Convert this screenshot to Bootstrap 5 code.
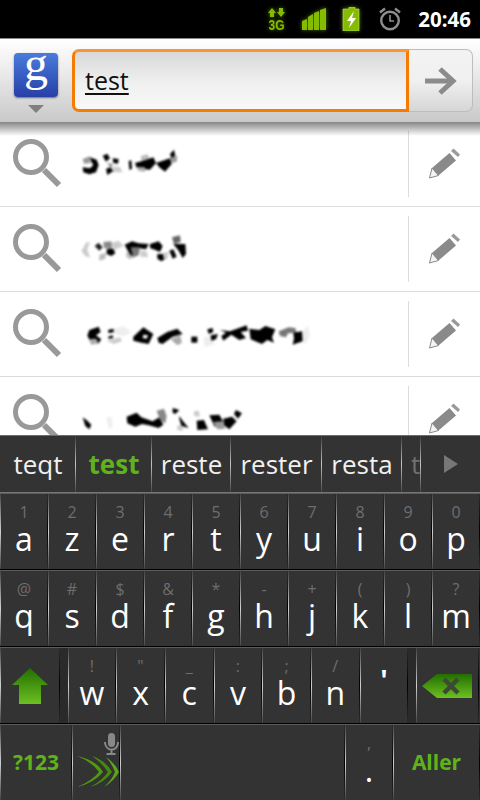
<!DOCTYPE html>
<html lang="fr">
<head>
  <meta charset="UTF-8">
  <title>Recherche Google</title>
  <meta name="viewport" content="width=device-width, initial-scale=1.0">
  <link rel="stylesheet" href="https://cdn.jsdelivr.net/npm/bootstrap@5.3.0/dist/css/bootstrap.min.css">
  <style>
    body {
      background-color: #000;
      font-family: "Open Sans", "Liberation Sans", sans-serif;
    }
    .phone-frame {
      width: 480px;
      height: 800px;
      background-color: #fff;
    }

    /* status bar */
    .status-bar {
      height: 39px;
      flex: none;
      padding-right: 9px;
      background-color: #000;
      border-bottom: 1px solid #8a8a8a;
    }
    .status-time {
      color: #fff;
      font-weight: 700;
      font-size: 20.5px;
      line-height: 1;
    }
    .status-glow {
      filter: drop-shadow(0 0 2px rgba(140, 200, 0, .6));
    }

    /* search header */
    .search-head {
      height: 83px;
      flex: none;
      z-index: 1;
      padding: 10px 7px 0 14px;
      background: linear-gradient(#fff, #f0f0f0 30%, #c9c9c9);
    }
    .search-head::after {
      content: "";
      position: absolute;
      left: 0;
      right: 0;
      top: 100%;
      height: 14px;
      background: linear-gradient(rgba(0, 0, 0, .48), rgba(0, 0, 0, 0));
    }
    .google-col {
      width: 44px;
      margin-right: 14px;
      padding-top: 4px;
    }
    .google-logo {
      width: 44px;
      height: 44px;
      border-radius: 4px;
      background: linear-gradient(#4a7bdc, #2740a8);
      box-shadow: 0 1px 2px rgba(0, 0, 0, .5);
      color: #fff;
      font-family: "Liberation Serif", serif;
      font-size: 48px;
      line-height: 22px;
    }
    .google-caret {
      width: 0;
      height: 0;
      margin-top: 8px;
      border-style: solid;
      border-width: 8px 8px 0;
      border-color: #7f7f7f transparent transparent;
    }
    .query-box {
      width: 337px;
      height: 63px;
      padding-left: 10px;
      border: 3px solid #f57c00;
      border-top-color: #fb9433;
      border-radius: 7px 0 0 7px;
      background: linear-gradient(#d8d8d8, #f0f0f0 55%, #f8f8f8);
      color: #111;
      font-size: 25px;
    }
    .query-box span {
      text-decoration: underline;
      text-underline-offset: 3px;
    }
    .go-btn {
      width: 64px;
      height: 63px;
      border: 1px solid #bdbdbd;
      border-left: 0;
      border-radius: 0 7px 7px 0;
      background: linear-gradient(#f3f3f3, #f0f0f0 50%, #d6d6d6);
    }

    /* suggestions */
    .suggest-row {
      height: 85px;
      flex: none;
      border-bottom: 1px solid #dcdcdc;
    }
    .suggest-icon {
      width: 70px;
      padding-left: 13px;
    }
    .suggest-edit {
      width: 72px;
      height: 66px;
      padding-left: 20px;
      border-left: 1px solid #dcdcdc;
    }
    .smudge {
      filter: blur(.8px);
    }

    /* keyboard */
    .kb-wrap {
      flex: none;
      height: 365px;
      background-color: #333;
      color: #fff;
    }
    .cand-bar {
      height: 58px;
      flex: none;
      border-top: 1px solid #6c6c6c;
      border-bottom: 1px solid #777;
      font-size: 26px;
    }
    .cand-cell {
      background-image: linear-gradient(rgba(255, 255, 255, .05), #c4c4c4 50%, rgba(255, 255, 255, .1));
      background-repeat: no-repeat;
      background-position: right top;
      background-size: 1px 100%;
      color: #f0f0f0;
    }
    .cand-76 { width: 76px; }
    .cand-79 { width: 79px; }
    .cand-91 { width: 91px; }
    .cand-80 { width: 80px; }
    .cand-active {
      color: #5fb31a;
      font-weight: 700;
    }
    .cand-fade {
      width: 19px;
      padding-left: 9px;
      color: #707070;
    }
    .kb-row {
      height: 77px;
      flex: none;
      border-bottom: 1px solid #000;
      border-top: 1px solid #5c5c5c;
    }
    .kb-key {
      flex: none;
      width: 48px;
      padding-top: 9px;
      background-image:
        linear-gradient(#444, #d0d0d0 50%, #444),
        linear-gradient(#2c2c2c, #000 50%, #2c2c2c);
      background-repeat: no-repeat;
      background-position: left top, right top;
      background-size: 1px 100%, 1px 100%;
    }
    .key-hint {
      height: 18px;
      color: #6e6e6e;
      font-size: 16px;
      line-height: 18px;
    }
    .key-char {
      font-size: 32px;
      line-height: 36px;
    }
    .key-quote {
      height: 18px;
      margin-top: 14px;
      font-size: 28px;
      font-weight: 700;
      line-height: 18px;
    }
    .key-row3 { width: 48.7px; }
    .key-shift { width: 60px; padding-top: 0; }
    .key-gap { width: 7.5px; flex: none; background-color: #2a2a2a; }
    .key-del { width: 63px; padding-top: 0; }
    .key-sym { width: 72px; padding-top: 0; }
    .key-swype { padding-top: 0; }
    .key-space { width: 225px; }
    .key-go { width: 87px; padding-top: 0; }
    .key-action {
      color: #5fb31a;
      font-weight: 700;
      font-size: 21px;
    }
  </style>
</head>
<body>
<div class="phone-frame d-flex flex-column overflow-hidden">

  <!-- status bar -->
  <div class="status-bar d-flex align-items-center justify-content-end gap-3">
    <svg class="status-glow" width="19" height="30" viewBox="0 0 19 30">
      <path d="M5 4l4 5H7v4H3V9H1zM14 13l-4-5h2V4h4v4h2z" fill="#86bc00"/>
      <text x="1.500" y="26" textLength="16" lengthAdjust="spacingAndGlyphs" font-family="Liberation Sans, sans-serif" font-weight="700" font-size="15" fill="#86bc00">3G</text>
    </svg>
    <svg class="status-glow" width="24" height="22" viewBox="0 0 24 22">
      <path d="M0 13l5-2v11H0zM6 9l5-3v16H6zM12 5l5-2v19h-5zM18 2l6-2v22h-6z" fill="#86bc00"/>
    </svg>
    <svg class="status-glow" width="21" height="24" viewBox="0 0 21 24">
      <path d="M7 0h6v2h4v22H1V2h6z" fill="#86bc00" stroke="#bcd880" stroke-width=".6"/>
      <path d="M12 4L5 14h4l-2 7 7-10h-4z" fill="#fff"/>
    </svg>
    <svg width="23" height="24" viewBox="0 0 23 24" fill="none" stroke="#8e8e8e">
      <circle cx="11" cy="13.5" r="8.8" stroke-width="2.4"/>
      <path d="M11 8v6h4" stroke-width="1.6"/>
      <path d="M1 5.5L6 1.5M21 5.5L16 1.5" stroke-width="2.4"/>
    </svg>
    <span class="status-time">20:46</span>
  </div>

  <!-- search header -->
  <div class="search-head position-relative d-flex align-items-start">
    <div class="google-col d-flex flex-column align-items-center">
      <div class="google-logo d-flex justify-content-center">g</div>
      <div class="google-caret"></div>
    </div>
    <div class="query-box d-flex align-items-center"><span>test</span></div>
    <div class="go-btn d-flex align-items-center justify-content-center">
      <svg width="32" height="28" viewBox="0 0 32 28" fill="none" stroke="#8b8b8b" stroke-width="5">
        <path d="M0 14h28"/>
        <path d="M15 2l13 12-13 12"/>
      </svg>
    </div>
  </div>

  <!-- suggestions -->
  <div class="flex-grow-1 overflow-hidden">
    <div class="suggest-row d-flex align-items-center">
      <div class="suggest-icon">
        <svg width="50" height="50" viewBox="0 0 50 50" fill="none" stroke="#999">
          <circle cx="18" cy="18" r="15.5" stroke-width="5"/>
          <path d="M31 31l15 15" stroke-width="6"/>
        </svg>
      </div>
      <svg class="smudge flex-grow-1" height="50" viewBox="0 0 338 50" preserveAspectRatio="xMinYMid meet">
        <g transform="scale(.3333)">
          <path fill="#999" d="M38 60l22-8 2 20-20 2z"/>
          <path d="M60 55l20 7 6 16-8 22-20 6-18-6-2-15 22 3 10-10-6-10z"/>
          <path d="M98 50l14-6 8 14-12 10zM128 58l18 2-2 14-14-2zM108 90l14-6 8 12-18 12z"/>
          <path fill="#999" d="M112 72l16 2-4 18z"/>
          <path fill="#ccc" d="M130 82l20 2 8 16h-28z"/>
          <path d="M176 66l8-2 2 26-8 2z"/>
          <path fill="#bbb" d="M212 52l20-6 8 14-24 8z"/>
          <path d="M195 72l35-10 20-7 8 17-18 20-20-2-20-4z"/>
          <path fill="#aaa" d="M200 84l25 1v13l-20-3z"/>
          <path d="M258 72l42-14 5 17-20 23-17-13z"/>
          <path fill="#999" d="M300 58l22-8-2 18-15 4z"/>
          <path d="M300 45l12-13 4 18-12 8z"/>
        </g>
      </svg>
      <div class="suggest-edit d-flex align-items-center">
        <svg width="32" height="32" viewBox="0 0 32 32">
          <path d="M3 20l6.500 7.500L.5 30z" fill="#f4f4f4" stroke="#888"/>
          <path d="M3 20L20.500 5 27 12.500 9.500 27.500z" fill="#8a8a8a"/>
          <path d="M22 3l2.500-2.500 6.500 6L29 9z" fill="#9a9a9a"/>
        </svg>
      </div>
    </div>

    <div class="suggest-row d-flex align-items-center">
      <div class="suggest-icon">
        <svg width="50" height="50" viewBox="0 0 50 50" fill="none" stroke="#999">
          <circle cx="18" cy="18" r="15.5" stroke-width="5"/>
          <path d="M31 31l15 15" stroke-width="6"/>
        </svg>
      </div>
      <svg class="smudge flex-grow-1" height="50" viewBox="0 0 338 50" preserveAspectRatio="xMinYMid meet">
        <g transform="scale(.3333)">
          <path fill="#ccc" d="M48 56l12-2-8 22 8 26-14-6-12-14z"/>
          <path fill="#bbb" d="M88 92l20-6-2 18-18 6z"/>
          <path fill="#ccc" d="M122 58l24-8 14 16-26 12z"/>
          <path fill="#888" d="M100 54l24-2 2 24-24-4z"/>
          <path fill="#222" d="M74 66l12-10 12 14-10 10z"/>
          <path d="M110 76l20-2 6 14-12 8-14-6z"/>
          <path fill="#bbb" d="M170 84l18-2 6 18-16 6-10-10z"/>
          <path fill="#ccc" d="M210 80l20 2 4 18-22-2z"/>
          <path d="M164 62l22-10 20 6 30 2-8 16-24-4-6 16-14 8-12-18z"/>
          <path fill="#777" d="M182 70l28 0-4 24-16 6z"/>
          <path d="M240 60l26-8 12 14-8 18-14-6-16-6z"/>
          <path d="M262 90l18 0 6 14-12 8-12-8z"/>
          <path fill="#ccc" d="M280 86l16-2-4 22-12-4z"/>
          <path d="M298 80l12-4 10 22-12 6z"/>
          <path fill="#666" d="M306 40l24-6 2 20-20 6z"/>
          <path d="M310 60l36 0 2 30-10 12-12-22z"/>
        </g>
      </svg>
      <div class="suggest-edit d-flex align-items-center">
        <svg width="32" height="32" viewBox="0 0 32 32">
          <path d="M3 20l6.500 7.500L.5 30z" fill="#f4f4f4" stroke="#888"/>
          <path d="M3 20L20.500 5 27 12.500 9.500 27.500z" fill="#8a8a8a"/>
          <path d="M22 3l2.500-2.500 6.500 6L29 9z" fill="#9a9a9a"/>
        </svg>
      </div>
    </div>

    <div class="suggest-row d-flex align-items-center">
      <div class="suggest-icon">
        <svg width="50" height="50" viewBox="0 0 50 50" fill="none" stroke="#999">
          <circle cx="18" cy="18" r="15.5" stroke-width="5"/>
          <path d="M31 31l15 15" stroke-width="6"/>
        </svg>
      </div>
      <svg class="smudge flex-grow-1" height="50" viewBox="0 0 338 50" preserveAspectRatio="xMinYMid meet">
        <g transform="translate(10 5) scale(.3333)">
          <path fill="#eee" d="M100 45l30-8 24 16-20 14-30-6zM370 70l30-4 2 26-28 6zM660 60l24-26 6 30-14 28z"/>
          <path d="M28 48l28-10 6 16-14 10 16 12-10 14-14-14-12 2-6-14z"/>
          <path fill="#aaa" d="M26 76l22-2 8 14-22 4z"/>
          <path fill="#ccc" d="M80 80l40-10 6 12-24 8z"/>
          <path d="M84 48l16-4 2 10-16 4zM84 68l14-4 2 8-14 2z"/>
          <path d="M160 68l30-28 30 20-14 30-22-4-24-6z"/>
          <path fill="#fff" d="M190 62l14 2-4 10-12-2z"/>
          <path d="M232 72l30-18 30-10 16 16-30 8-30 22-12-4z"/>
          <path fill="#aaa" d="M272 76l28-12 6 22-14 8z"/>
          <path d="M334 68h18v18h-18z"/>
          <path d="M382 46l16-4 2 12-14 6zM392 64l22-4-6 16-14 4z"/>
          <path d="M420 48l30 4 50-18 4 16-22 4 16 18-20 6-24-16-24 18-6-14 14-10z"/>
          <path d="M508 44l30 4 18-12 30 10-10 24 6 16-20-8-16 12-34-14z"/>
          <path fill="#777" d="M596 52l30-12 20 2 4 14-26 2-6 12-18-4z"/>
          <path d="M640 56l26-4 2 30-30 10 4-18z"/>
        </g>
      </svg>
      <div class="suggest-edit d-flex align-items-center">
        <svg width="32" height="32" viewBox="0 0 32 32">
          <path d="M3 20l6.500 7.500L.5 30z" fill="#f4f4f4" stroke="#888"/>
          <path d="M3 20L20.500 5 27 12.500 9.500 27.500z" fill="#8a8a8a"/>
          <path d="M22 3l2.500-2.500 6.500 6L29 9z" fill="#9a9a9a"/>
        </svg>
      </div>
    </div>

    <div class="suggest-row d-flex align-items-center">
      <div class="suggest-icon">
        <svg width="50" height="50" viewBox="0 0 50 50" fill="none" stroke="#999">
          <circle cx="18" cy="18" r="15.5" stroke-width="5"/>
          <path d="M31 31l15 15" stroke-width="6"/>
        </svg>
      </div>
      <svg class="smudge flex-grow-1" height="78" viewBox="0 0 338 78" preserveAspectRatio="xMinYMid meet">
        <g transform="translate(-70 0) scale(.3333)">
          <path d="M248 112l14 10 12 12-6 14-12-10z"/>
          <path fill="#eee" d="M320 112l14-2 4 30-12 6z"/>
          <path d="M380 110l30-12 14 14 34 12 20-12 12 22-14 10-30-8-20-4-20 8-24-10z"/>
          <path fill="#888" d="M470 92l22-6 8 22-4 22-16-10z"/>
          <path d="M518 84l20 6-12 12-8-4zM538 108l10 14 18 22-22-6-6-22z"/>
          <path fill="#ccc" d="M582 94l14-2 4 18-18-2zM532 136l18 2-2 14-16-2z"/>
          <path d="M590 122l22-2 12 28-32 2z"/>
          <path d="M628 106l30-2 12 22-26 14z"/>
          <path fill="#999" d="M640 126l26-2 10 22-24 2z"/>
          <path d="M670 116l26-6 14 14-22 24-16-12zM708 90l18 10-12 16-12-14z"/>
        </g>
      </svg>
      <div class="suggest-edit d-flex align-items-center">
        <svg width="32" height="32" viewBox="0 0 32 32">
          <path d="M3 20l6.500 7.500L.5 30z" fill="#f4f4f4" stroke="#888"/>
          <path d="M3 20L20.500 5 27 12.500 9.500 27.500z" fill="#8a8a8a"/>
          <path d="M22 3l2.500-2.500 6.500 6L29 9z" fill="#9a9a9a"/>
        </svg>
      </div>
    </div>
  </div>

  <!-- keyboard -->
  <div class="kb-wrap position-relative d-flex flex-column overflow-hidden">
    <div class="cand-bar d-flex">
      <div class="cand-cell cand-76 d-flex align-items-center justify-content-center">teqt</div>
      <div class="cand-cell cand-76 cand-active d-flex align-items-center justify-content-center">test</div>
      <div class="cand-cell cand-79 d-flex align-items-center justify-content-center">reste</div>
      <div class="cand-cell cand-91 d-flex align-items-center justify-content-center">rester</div>
      <div class="cand-cell cand-80 d-flex align-items-center justify-content-center">resta</div>
      <div class="cand-cell cand-fade d-flex align-items-center">t</div>
      <div class="flex-grow-1 d-flex align-items-center justify-content-center">
        <svg width="14" height="18" viewBox="0 0 14 18"><path d="M0 0l14 9-14 9z" fill="#777"/></svg>
      </div>
    </div>

    <div class="kb-row d-flex">
      <div class="kb-key d-flex flex-column align-items-center"><span class="key-hint">1</span><span class="key-char">a</span></div>
      <div class="kb-key d-flex flex-column align-items-center"><span class="key-hint">2</span><span class="key-char">z</span></div>
      <div class="kb-key d-flex flex-column align-items-center"><span class="key-hint">3</span><span class="key-char">e</span></div>
      <div class="kb-key d-flex flex-column align-items-center"><span class="key-hint">4</span><span class="key-char">r</span></div>
      <div class="kb-key d-flex flex-column align-items-center"><span class="key-hint">5</span><span class="key-char">t</span></div>
      <div class="kb-key d-flex flex-column align-items-center"><span class="key-hint">6</span><span class="key-char">y</span></div>
      <div class="kb-key d-flex flex-column align-items-center"><span class="key-hint">7</span><span class="key-char">u</span></div>
      <div class="kb-key d-flex flex-column align-items-center"><span class="key-hint">8</span><span class="key-char">i</span></div>
      <div class="kb-key d-flex flex-column align-items-center"><span class="key-hint">9</span><span class="key-char">o</span></div>
      <div class="kb-key d-flex flex-column align-items-center"><span class="key-hint">0</span><span class="key-char">p</span></div>
    </div>

    <div class="kb-row d-flex">
      <div class="kb-key d-flex flex-column align-items-center"><span class="key-hint">@</span><span class="key-char">q</span></div>
      <div class="kb-key d-flex flex-column align-items-center"><span class="key-hint">#</span><span class="key-char">s</span></div>
      <div class="kb-key d-flex flex-column align-items-center"><span class="key-hint">$</span><span class="key-char">d</span></div>
      <div class="kb-key d-flex flex-column align-items-center"><span class="key-hint">&amp;</span><span class="key-char">f</span></div>
      <div class="kb-key d-flex flex-column align-items-center"><span class="key-hint">*</span><span class="key-char">g</span></div>
      <div class="kb-key d-flex flex-column align-items-center"><span class="key-hint">-</span><span class="key-char">h</span></div>
      <div class="kb-key d-flex flex-column align-items-center"><span class="key-hint">+</span><span class="key-char">j</span></div>
      <div class="kb-key d-flex flex-column align-items-center"><span class="key-hint">(</span><span class="key-char">k</span></div>
      <div class="kb-key d-flex flex-column align-items-center"><span class="key-hint">)</span><span class="key-char">l</span></div>
      <div class="kb-key d-flex flex-column align-items-center"><span class="key-hint">?</span><span class="key-char">m</span></div>
    </div>

    <div class="kb-row d-flex">
      <div class="kb-key key-shift d-flex align-items-center justify-content-center">
        <svg width="38" height="36" viewBox="0 0 38 36">
          <defs>
            <linearGradient id="greenFill" x1="0" y1="0" x2="0" y2="1">
              <stop offset="0" stop-color="#226e00"/>
              <stop offset="1" stop-color="#6dc022"/>
            </linearGradient>
          </defs>
          <path d="M19 0l18 17h-7v19H8V17H1z" fill="url(#greenFill)"/>
        </svg>
      </div>
      <div class="key-gap"></div>
      <div class="kb-key key-row3 d-flex flex-column align-items-center"><span class="key-hint">!</span><span class="key-char">w</span></div>
      <div class="kb-key key-row3 d-flex flex-column align-items-center"><span class="key-hint">"</span><span class="key-char">x</span></div>
      <div class="kb-key key-row3 d-flex flex-column align-items-center"><span class="key-hint">_</span><span class="key-char">c</span></div>
      <div class="kb-key key-row3 d-flex flex-column align-items-center"><span class="key-hint">:</span><span class="key-char">v</span></div>
      <div class="kb-key key-row3 d-flex flex-column align-items-center"><span class="key-hint">;</span><span class="key-char">b</span></div>
      <div class="kb-key key-row3 d-flex flex-column align-items-center"><span class="key-hint">/</span><span class="key-char">n</span></div>
      <div class="kb-key key-row3 d-flex flex-column align-items-center"><span class="key-quote">'</span></div>
      <div class="key-gap"></div>
      <div class="kb-key key-del d-flex align-items-center justify-content-center">
        <svg width="50" height="26" viewBox="0 0 50 26">
          <path d="M0 13L15 1h35v24H15z" fill="url(#greenFill)"/>
          <path d="M22 6l14 14M36 6L22 20" stroke="#3c4a34" stroke-width="4.500" fill="none"/>
        </svg>
      </div>
    </div>

    <div class="kb-row d-flex flex-grow-1">
      <div class="kb-key key-sym key-action d-flex align-items-center justify-content-center">?123</div>
      <div class="kb-key key-swype d-flex">
        <svg width="48" height="75" viewBox="0 0 48 75">
          <g fill="#888">
            <rect x="36" y="8" width="7" height="14" rx="3.500"/>
            <path d="M32 17h2c0 4 2 6.500 5.500 6.500S45 21 45 17h2c0 5-3 8-6.500 8.500V28h3v2h-9v-2h4v-2.500C36 25 32 22 32 17z"/>
          </g>
          <path d="M5 31Q24 35 31 47 22 58 5 62 20 56 27 47 20 37 5 31z" fill="#4f9a10"/>
          <path d="M20 31Q34 36 40 47 32 58 18 62 30 56 36 47 30 38 20 31z" fill="#468c0c"/>
          <path d="M34 32Q43 38 47 47 42 56 32 62 40 55 43 47 40 39 34 32z" fill="#5aa814"/>
        </svg>
      </div>
      <div class="kb-key key-space"></div>
      <div class="kb-key d-flex flex-column align-items-center"><span class="key-hint">,</span><span class="key-char">.</span></div>
      <div class="kb-key key-go key-action d-flex align-items-center justify-content-center">Aller</div>
    </div>
  </div>
</div>
<script src="https://cdn.jsdelivr.net/npm/bootstrap@5.3.0/dist/js/bootstrap.bundle.min.js"></script>
</body>
</html>
